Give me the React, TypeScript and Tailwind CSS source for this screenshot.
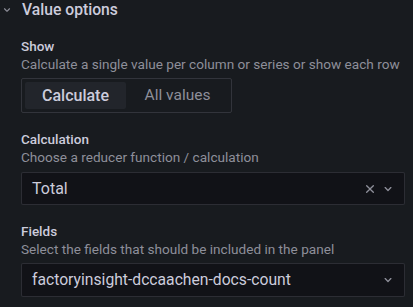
import React from "react";

const Chevron = ({ className = "" }: { className?: string }) => (
  <svg viewBox="0 0 24 24" className={className} fill="currentColor">
    <path d="M17 9.17a1 1 0 0 0-1.41 0L12 12.71 8.46 9.17a1 1 0 0 0-1.41 0 1 1 0 0 0 0 1.42l4.24 4.24a1 1 0 0 0 1.42 0L17 10.59a1 1 0 0 0 0-1.42Z" />
  </svg>
);

const Times = ({ className = "" }: { className?: string }) => (
  <svg viewBox="0 0 24 24" className={className} fill="currentColor">
    <path d="M13.41 12l4.3-4.29a1 1 0 1 0-1.42-1.42L12 10.59l-4.29-4.3a1 1 0 0 0-1.42 1.42l4.3 4.29-4.3 4.29a1 1 0 0 0 0 1.42 1 1 0 0 0 1.42 0l4.29-4.3 4.29 4.3a1 1 0 0 0 1.42 0 1 1 0 0 0 0-1.42Z" />
  </svg>
);

const Label = ({ children }: { children: React.ReactNode }) => (
  <div className="text-[13.5px] font-medium leading-[17px] text-[#ccccdc]">{children}</div>
);

const Desc = ({ children }: { children: React.ReactNode }) => (
  <div className="text-[13.6px] leading-[18px] text-[#8e8f9a]">{children}</div>
);

export default function App() {
  return (
    <div
      className="w-[413px] h-[307px] bg-[#181b1f] text-[#ccccdc] overflow-hidden"
      style={{ fontFamily: "Roboto, 'Liberation Sans', sans-serif" }}
    >
      <div className="flex items-center h-[20px]">
        <Chevron className="w-[14px] h-[14px] text-[#8e8f9a]" />
        <span className="ml-[8px] text-[15.7px] font-medium leading-[20px] text-[#ccccdc]">Value options</span>
      </div>
      <div className="pl-[21px] pr-[8px]">
        <div className="mt-[18px]">
          <Label>Show</Label>
          <Desc>Calculate a single value per column or series or show each row</Desc>
          <div className="mt-[5px] inline-flex h-[35px] border border-[rgba(204,204,220,0.15)] rounded-[2px] p-[3px] gap-[1px]">
            <div className="w-[101px] flex items-center justify-center bg-[#22252b] rounded-[2px] text-[16px] font-medium text-[#ccccdc]">
              Calculate
            </div>
            <div className="w-[101px] flex items-center justify-center text-[15.5px] text-[#8e8f9a]">
              All values
            </div>
          </div>
        </div>
        <div className="mt-[18px]">
          <Label>Calculation</Label>
          <Desc>Choose a reducer function / calculation</Desc>
          <div className="mt-[6px] h-[33px] bg-[#111217] border border-[rgba(204,204,220,0.15)] rounded-[2px] flex items-center pl-[10px] pr-[8px]">
            <span className="flex-1 text-[16px] text-[#ccccdc]">Total</span>
            <Times className="w-[16px] h-[16px] text-[#8e8f9a]" />
            <Chevron className="ml-[2px] w-[16px] h-[16px] text-[#8e8f9a]" />
          </div>
        </div>
        <div className="mt-[18px]">
          <Label>Fields</Label>
          <Desc>Select the fields that should be included in the panel</Desc>
          <div className="mt-[5px] h-[34px] bg-[#111217] border border-[rgba(204,204,220,0.15)] rounded-[2px] flex items-center pl-[10px] pr-[8px]">
            <span className="flex-1 text-[15.7px] text-[#ccccdc]">factoryinsight-dccaachen-docs-count</span>
            <Chevron className="w-[16px] h-[16px] text-[#8e8f9a]" />
          </div>
        </div>
      </div>
    </div>
  );
}
